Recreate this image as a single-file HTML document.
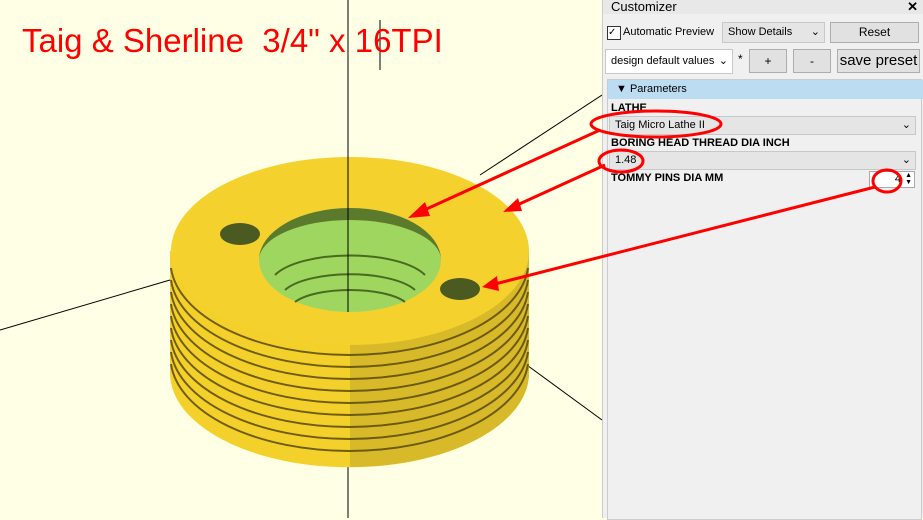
<!DOCTYPE html>
<html><head><style>
body{margin:0;width:923px;height:518px;overflow:hidden;background:#ffffe5;font-family:"Liberation Sans",sans-serif;position:relative}
.p{position:absolute;left:602px;top:0;width:321px;height:518px;background:#f0f0f0;border-left:1px solid #ccc;font-size:12px}
.a{position:absolute}
.btn{position:absolute;background:#e1e1e1;border:1px solid #adadad;box-sizing:border-box;text-align:center;font-size:12px}
.sel{position:absolute;background:#e5e5e5;border:1px solid #c8c8c8;box-sizing:border-box;font-size:11px;padding-left:5px}
</style></head><body>
<svg class="a" style="left:0;top:0" width="602" height="518">
<g stroke="#000" stroke-width="1" fill="none">
<line x1="348" y1="0" x2="348" y2="518"/>
<line x1="602" y1="95" x2="480" y2="175"/>
<line x1="0" y1="330" x2="170" y2="280"/>
<line x1="520" y1="360" x2="602" y2="420"/>
<line x1="380" y1="20" x2="380" y2="70"/>
</g>
<path d="M170 251 L170 373 A179 94 0 0 0 529 373 L529 251 Z" fill="#f4d02a"/>
<path d="M350 251 L350 467 A179 94 0 0 0 529 373 L529 251 Z" fill="#d8b92a"/>
<g stroke="#5a4a08" stroke-width="2" fill="none" opacity="0.85">
<path d="M171 268 A179 94 0 0 0 528 268"/><path d="M171 280 A179 94 0 0 0 528 280"/><path d="M171 292 A179 94 0 0 0 528 292"/><path d="M171 304 A179 94 0 0 0 528 304"/><path d="M171 316 A179 94 0 0 0 528 316"/><path d="M171 328 A179 94 0 0 0 528 328"/><path d="M171 340 A179 94 0 0 0 528 340"/><path d="M171 352 A179 94 0 0 0 528 352"/><path d="M171 364 A179 94 0 0 0 528 364"/>
</g>
<ellipse cx="350" cy="251" rx="179" ry="94" fill="#f5d12e"/>
<ellipse cx="350" cy="260" rx="91" ry="52" fill="#9fd65f"/>
<path d="M259 260 A91 52 0 0 1 441 260 A91 40 0 0 0 259 260Z" fill="#5c7a2c"/>
<g stroke="#4a6a20" stroke-width="2" fill="none"><path d="M275 275 A80 30 0 0 1 425 275"/><path d="M285 290 A70 25 0 0 1 415 290"/><path d="M295 302 A60 20 0 0 1 405 302"/></g>
<ellipse cx="240" cy="234" rx="20" ry="11" fill="#4a5a20"/>
<ellipse cx="460" cy="289" rx="20" ry="11" fill="#4a5a20"/>
<line x1="348" y1="150" x2="348" y2="312" stroke="#000"/>
<text x="22" y="52" font-size="33" fill="#f00" font-family="Liberation Sans" xml:space="preserve">Taig &amp; Sherline  3/4" x 16TPI</text>
</svg>
<div class="p">
<div class="a" style="left:0;top:0;width:313px;height:14px;background:#e8e8e8;font-size:13px;line-height:14px;padding-left:8px">Customizer<span style="position:absolute;right:6px;font-weight:bold">✕</span></div>
<div class="a" style="left:4px;top:26px;width:12px;height:12px;border:1px solid #333;background:#fff;font-size:10px;line-height:12px">✓</div>
<div class="a" style="left:20px;top:26px;font-size:11px">Automatic Preview</div>
<div class="sel" style="left:119px;top:22px;width:103px;height:21px;line-height:19px;font-size:11px">Show Details<span style="float:right;padding-right:4px">⌄</span></div>
<div class="btn" style="left:227px;top:22px;width:89px;height:21px;line-height:19px">Reset</div>
<div class="sel" style="left:2px;top:49px;width:128px;height:25px;line-height:23px;background:#fff">design default values<span style="float:right;padding-right:4px">⌄</span></div>
<div class="a" style="left:135px;top:52px">*</div>
<div class="btn" style="left:146px;top:49px;width:38px;height:24px;line-height:22px">+</div>
<div class="btn" style="left:190px;top:49px;width:38px;height:24px;line-height:22px">-</div>
<div class="btn" style="left:234px;top:49px;width:83px;height:24px;line-height:22px;font-size:15px">save preset</div>
<div class="a" style="left:4px;top:79px;width:313px;height:439px;border:1px solid #ccc;background:#f0f0f0"></div>
<div class="a" style="left:5px;top:80px;width:312px;height:19px;background:#bcdcf2;line-height:19px;font-size:11px;padding-left:8px">▼ Parameters</div>
<div class="a" style="left:8px;top:102px;font-weight:bold;font-size:11px">LATHE</div>
<div class="sel" style="left:6px;top:116px;width:307px;height:19px;line-height:17px">Taig Micro Lathe II<span style="float:right;padding-right:4px">⌄</span></div>
<div class="a" style="left:8px;top:137px;font-weight:bold;font-size:11px">BORING HEAD THREAD DIA INCH</div>
<div class="sel" style="left:6px;top:151px;width:307px;height:19px;line-height:17px">1.48<span style="float:right;padding-right:4px">⌄</span></div>
<div class="a" style="left:8px;top:172px;font-weight:bold;font-size:11px">TOMMY PINS DIA MM</div>
<div class="a" style="left:266px;top:171px;width:46px;height:17px;border:1px solid #aaa;background:#fff;text-align:right;font-size:11px;line-height:15px;box-sizing:border-box;padding-right:13px">4<span style="position:absolute;right:2px;top:0;font-size:7px;line-height:7px">▲<br>▼</span></div>
</div>
<svg class="a" style="left:0;top:0" width="923" height="518">
<g stroke="#f00" stroke-width="3" fill="none">
<ellipse cx="656" cy="124" rx="65" ry="13"/>
<ellipse cx="621" cy="161" rx="22" ry="11"/>
<ellipse cx="887" cy="181" rx="14" ry="11"/>
<line x1="600" y1="130" x2="420" y2="212"/>
<line x1="605" y1="165" x2="515" y2="206"/>
<line x1="875" y1="187" x2="495" y2="284"/>
</g>
<g fill="#f00"><polygon points="408,218 425,202 430,216"/><polygon points="503,212 518,198 522,211"/><polygon points="482,287 497,276 499,291"/></g>
</svg>
</body></html>
